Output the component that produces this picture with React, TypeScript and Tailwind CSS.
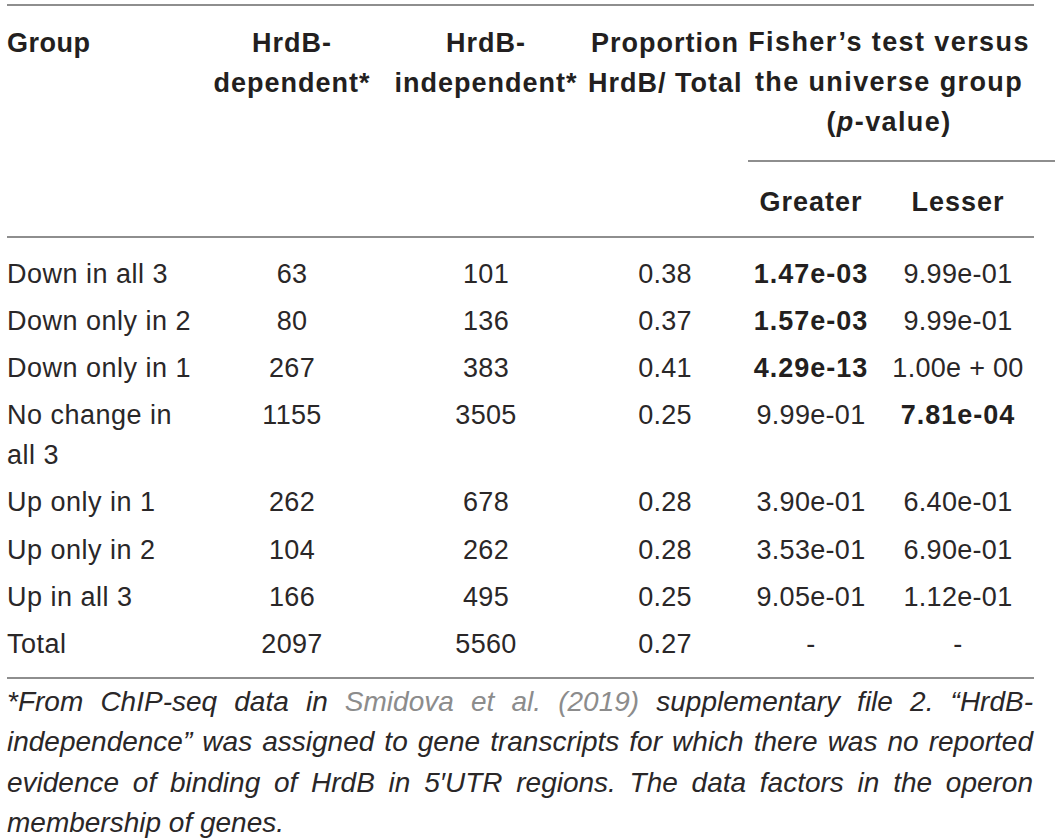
const rows: { group: string[]; dep: string; indep: string; prop: string; greater: string; lesser: string; bold?: 'g' | 'l' }[] = [
  { group: ['Down in all 3'], dep: '63', indep: '101', prop: '0.38', greater: '1.47e-03', lesser: '9.99e-01', bold: 'g' },
  { group: ['Down only in 2'], dep: '80', indep: '136', prop: '0.37', greater: '1.57e-03', lesser: '9.99e-01', bold: 'g' },
  { group: ['Down only in 1'], dep: '267', indep: '383', prop: '0.41', greater: '4.29e-13', lesser: '1.00e + 00', bold: 'g' },
  { group: ['No change in', 'all 3'], dep: '1155', indep: '3505', prop: '0.25', greater: '9.99e-01', lesser: '7.81e-04', bold: 'l' },
  { group: ['Up only in 1'], dep: '262', indep: '678', prop: '0.28', greater: '3.90e-01', lesser: '6.40e-01' },
  { group: ['Up only in 2'], dep: '104', indep: '262', prop: '0.28', greater: '3.53e-01', lesser: '6.90e-01' },
  { group: ['Up in all 3'], dep: '166', indep: '495', prop: '0.25', greater: '9.05e-01', lesser: '1.12e-01' },
  { group: ['Total'], dep: '2097', indep: '5560', prop: '0.27', greater: '-', lesser: '-' },
];

const Rule = () => <div className="h-[2px] w-[1027px] bg-[#8e8e8e]" />;

const Value = ({ text, bold }: { text: string; bold?: boolean }) => (
  <div className={bold ? 'text-center font-bold tracking-[1px] text-[#231f20]' : 'text-center tracking-[0.3px]'}>{text}</div>
);

export default function App() {
  return (
    <div className="w-[1060px] h-[840px] overflow-hidden bg-white pl-[7px] pt-[4px] text-[#2a2728] font-['Liberation_Sans',Arial,sans-serif]">
      <Rule />

      {/* header */}
      <div className="flex text-[27px] leading-[40px] font-bold tracking-[1px] whitespace-nowrap text-[#231f20]">
        <div className="grid grid-cols-[193px_184px_204px_154px] pt-[17px]">
          <div className="tracking-[0.5px]">Group</div>
          <div className="text-center">
            HrdB-
            <br />
            dependent*
          </div>
          <div className="text-center">
            HrdB-
            <br />
            independent*
          </div>
          <div className="text-center">
            Proportion
            <br />
            HrdB/ Total
          </div>
        </div>
        <div className="w-[294px] pt-[16px] pb-[14px]">
          <div className="text-center tracking-[1.4px]">
            Fisher’s test versus
            <br />
            the universe group
            <br />(<span className="italic">p</span>-value)
          </div>
          <div className="mt-[18px] ml-[6px] h-[2px] w-[307px] bg-[#8e8e8e]" />
          <div className="grid grid-cols-[138px_156px] pt-[20px]">
            <div className="text-center">Greater</div>
            <div className="text-center">Lesser</div>
          </div>
        </div>
      </div>

      <Rule />

      {/* body */}
      <div className="pt-[12px] pb-[9px] text-[27px] leading-[40px]">
        {rows.map((r, i) => (
          <div key={i} className="grid grid-cols-[193px_184px_204px_154px_138px_156px] py-[3.6px]">
            <div className="tracking-[0.5px]">
              {r.group.map((g, j) => (
                <div key={j}>{g}</div>
              ))}
            </div>
            <Value text={r.dep} />
            <Value text={r.indep} />
            <Value text={r.prop} />
            <Value text={r.greater} bold={r.bold === 'g'} />
            <Value text={r.lesser} bold={r.bold === 'l'} />
          </div>
        ))}
      </div>

      <Rule />

      {/* footnote */}
      <div className="w-[1026px] pt-[3px] text-[28px] leading-[40.5px] italic">
        <div className="text-justify [text-align-last:justify]">
          *From ChIP-seq data in <span className="text-[#8c8c8c]">Smidova et al. (2019)</span> supplementary file 2. “HrdB-
        </div>
        <div className="text-justify [text-align-last:justify]">
          independence” was assigned to gene transcripts for which there was no reported
        </div>
        <div className="text-justify [text-align-last:justify]">
          evidence of binding of HrdB in 5′UTR regions. The data factors in the operon
        </div>
        <div>membership of genes.</div>
      </div>
    </div>
  );
}
